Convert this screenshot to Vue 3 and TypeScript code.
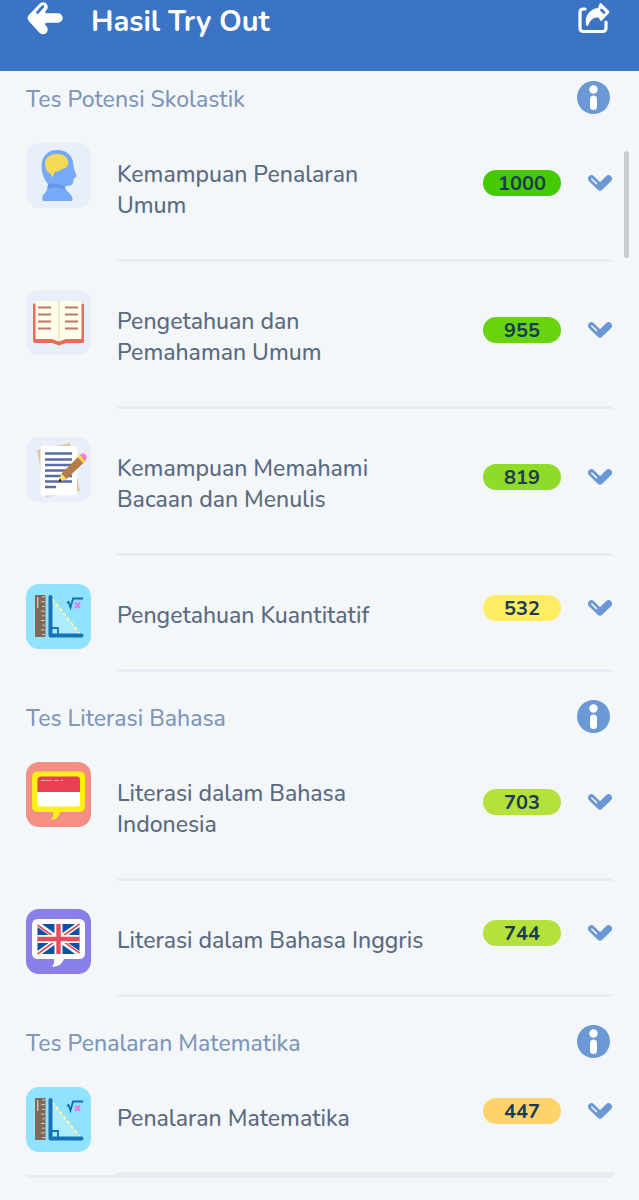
<script setup lang="ts">
type IconKind = 'head' | 'book' | 'paper' | 'math' | 'indonesia' | 'english'

interface Subtest {
  name: string
  score: number
  color: string
  icon: IconKind
}

interface Group {
  title: string
  items: Subtest[]
}

const groups: Group[] = [
  {
    title: 'Tes Potensi Skolastik',
    items: [
      { name: 'Kemampuan Penalaran Umum', score: 1000, color: '#45c900', icon: 'head' },
      { name: 'Pengetahuan dan Pemahaman Umum', score: 955, color: '#67d40f', icon: 'book' },
      { name: 'Kemampuan Memahami Bacaan dan Menulis', score: 819, color: '#8fdb27', icon: 'paper' },
      { name: 'Pengetahuan Kuantitatif', score: 532, color: '#ffee63', icon: 'math' },
    ],
  },
  {
    title: 'Tes Literasi Bahasa',
    items: [
      { name: 'Literasi dalam Bahasa Indonesia', score: 703, color: '#b5e13c', icon: 'indonesia' },
      { name: 'Literasi dalam Bahasa Inggris', score: 744, color: '#b5e13c', icon: 'english' },
    ],
  },
  {
    title: 'Tes Penalaran Matematika',
    items: [{ name: 'Penalaran Matematika', score: 447, color: '#ffd36b', icon: 'math' }],
  },
]

const rulerTicks = [0, 1, 2, 3, 4, 5, 6, 7, 8]
</script>

<template>
  <div class="page">
    <header class="bar">
      <button type="button" class="plain" aria-label="Kembali">
        <svg width="36" height="40" viewBox="0 0 36 40">
          <path d="M16 6 L5.500 17 L16 28.500 M7 17 H31" fill="none" stroke="#fff" stroke-width="9.500" stroke-linecap="round" stroke-linejoin="round" />
          <path d="M5 17 L17 7 L19 13 V21 L17 27 Z" fill="#fff" />
          <path d="M16 5.500 L10.500 11.500" stroke="#3b73c5" stroke-width="2.600" stroke-linecap="round" />
        </svg>
      </button>
      <h1>Hasil Try Out</h1>
      <button type="button" class="plain" aria-label="Bagikan">
        <svg width="32" height="38" viewBox="0 0 32 38">
          <path d="M7 7 H5.500 Q2 7 2 10.500 V26 Q2 29.500 5.500 29.500 H24.500 Q28 29.500 28 26 V20" fill="none" stroke="#fff" stroke-width="3.200" stroke-linecap="round" />
          <path d="M8 23 C6.500 13 12 7 20 6 L21.500 2 Q22 .5 23.500 1.500 L31 9 Q31.800 10 31 11 L24 18.500 Q22.500 19.500 22 18 L20.500 15.500 C15 15.500 12 18 10.500 23 Q9 25 8 23 Z" fill="#fff" />
          <path d="M23.500 8 L26 10.500" stroke="#3b73c5" stroke-width="2.600" stroke-linecap="round" />
        </svg>
      </button>
    </header>

    <main class="content">
      <section v-for="group in groups" :key="group.title" class="group">
        <div class="group-head">
          <h2>{{ group.title }}</h2>
          <button type="button" class="plain" :aria-label="'Info ' + group.title">
            <svg width="33" height="33" viewBox="0 0 33 33">
              <circle cx="16.500" cy="16.500" r="16.500" fill="#6b98d6" />
              <circle cx="16.500" cy="8.500" r="4.200" fill="#fff" />
              <rect x="13" y="14.500" width="7" height="14.500" rx="3.500" fill="#fff" />
            </svg>
          </button>
        </div>

        <ul class="rows">
          <li v-for="item in group.items" :key="item.name" class="row">
            <svg class="tile" :class="item.icon" viewBox="0 0 65 65" aria-hidden="true">
              <g v-if="item.icon === 'head'">
                <path d="M22 41 C18 36 15.500 30 15.500 23 C15.500 13 22 7 31 7 C41 7 47 13 47.500 22 C47.500 26 50 30 50.500 33 Q50.500 35 48 35 L47 40 Q46 43.500 39.500 43 V46 L45 52 Q47.500 56 46 58 H17 Q15.500 56 17 52 Q22 48 22 41 Z" fill="#76a9f8" />
                <path d="M22 41 Q30 39 39 44 V47 Q30 42 21.500 46 Z" fill="#6796e8" />
                <path d="M19.500 24 C17 16 24 10.500 31 11 C38 10.500 44 16 42 22 Q41 25.500 36 26 Q33 29 29 29 L26.500 34 Q25 34 25 31 Q20 29 19.500 24 Z" fill="#f4d957" />
              </g>
              <g v-else-if="item.icon === 'book'">
                <path d="M7 14.500 Q7 13.500 9 13.500 H56 Q58 13.500 58 15 V52 Q58 53 56 53 H40 L33 55.500 L26 53 H9 Q7 53 7 51 Z" fill="#e66e5c" />
                <path d="M9.500 12 Q21 9 33 12 Q44 9 55.500 12 V49 H40 L33 51.500 L26 49 H9.500 Z" fill="#fffeea" />
                <path d="M33 12 V51" stroke="#e9e6cb" stroke-width="1.500" />
                <path d="M12 17.500 H25 M12 24.500 H25 M12 31.500 H25 M12 38.500 H25 M39 17.500 H52 M39 24.500 H52 M39 31.500 H52 M39 38.500 H52" stroke="#bd776d" stroke-width="2.200" />
              </g>
              <g v-else-if="item.icon === 'paper'">
                <path d="M11 13 L44 6 L54 54 L20 60 Z" fill="#e0c6a2" />
                <rect x="14.500" y="9" width="36.500" height="49.500" rx="3" fill="#fff" />
                <path d="M19 16.500 H46 M19 22.500 H46 M19 28 H46 M19 33.500 H46 M19 39 H46 M19 44.500 H46 M19 50 H30" stroke="#596ba7" stroke-width="2.400" />
                <path d="M54 18 L59.500 24 L40.500 42 L32 45.500 L35.500 36.500 Z" fill="#b47b47" />
                <path d="M35.500 36.500 L40.500 42 L32 45.500 Z" fill="#ffe064" />
                <path d="M34 41.500 L36 44 L32 45.500 Z" fill="#222" />
                <path d="M51.500 20 L54 18 L59.500 24 L57 26 Z" fill="#ffdf42" />
                <path d="M54 18 L56 16.500 Q58 15.500 60 18 Q61.500 20.500 60.500 22 L59 24 Z" fill="#f57fd0" />
              </g>
              <g v-else-if="item.icon === 'math'">
                <rect x="9" y="11" width="10.500" height="42" rx="1" fill="#806758" />
                <path d="M11.800 13 V24" stroke="#efe7df" stroke-width="1" />
                <path v-for="n in rulerTicks" :key="n" :d="`M${n % 2 ? 15 : 16} ${13 + n * 4.700} H19`" stroke="#d9c9ba" stroke-width="1" />
                <path d="M25 14 L54 51 H25 Z" fill="#adebff" />
                <path d="M26 15 L54 50" stroke="#fff4a8" stroke-width="2" stroke-dasharray="4 2" />
                <path d="M24.500 13 V51.500 H55.500" fill="none" stroke="#1574b8" stroke-width="4" stroke-linecap="round" stroke-linejoin="round" />
                <path d="M26 44 H32 V51" fill="none" stroke="#1574b8" stroke-width="1.800" />
                <path d="M41 19 L42.500 18 L44.500 23.500 L47 14.500 H57" fill="none" stroke="#0f6fb3" stroke-width="1.800" />
                <path d="M49 18.500 L54 24 M54 18.500 L49 24" stroke="#e17ee5" stroke-width="2.200" />
              </g>
              <g v-else-if="item.icon === 'indonesia'">
                <path d="M12 9.500 H53 Q59 9.500 59 15 V44 Q59 50 53 50 H34 Q33 57 25 58 Q28 54 27.500 50 H12 Q6 50 6 44 V15 Q6 9.500 12 9.500 Z" fill="#ffef18" />
                <path d="M11.500 30 V18 Q11.500 14.500 15 14.500 H51 Q54 14.500 54 18 V30 Z" fill="#e83f52" />
                <path d="M11.500 30 H54 V41 Q54 44.500 51 44.500 H15 Q11.500 44.500 11.500 41 Z" fill="#fff" />
                <path d="M15 18.500 H26 M28 18.500 H33 M35 18.500 H37" stroke="#f4a1ad" stroke-width="1" />
              </g>
              <g v-else>
                <path d="M12 10 H53 Q59 10 59 16 V44 Q59 50 53 50 H38 Q36 57 26 58 Q29 54 28 50 H12 Q6 50 6 44 V16 Q6 10 12 10 Z" fill="#fff" />
                <rect x="11.500" y="15" width="42" height="30" fill="#0952a6" />
                <path d="M11.500 15 L53.500 45 M53.500 15 L11.500 45" stroke="#fff" stroke-width="5" />
                <path d="M11.500 16 L28 28 M53.500 15 L37 27 M53.500 44 L37 32 M11.500 45 L28 33" stroke="#e94b5b" stroke-width="1.600" />
                <path d="M32.500 15 V45 M11.500 30 H53.500" stroke="#fff" stroke-width="8" />
                <path d="M32.500 15 V45 M11.500 30 H53.500" stroke="#e94b5b" stroke-width="4.400" />
              </g>
            </svg>
            <div class="body">
              <span class="name">{{ item.name }}</span>
              <div class="result">
                <span class="score" :style="{ backgroundColor: item.color }">{{ item.score }}</span>
                <button type="button" class="plain" :aria-label="'Detail ' + item.name">
                  <svg width="24" height="16" viewBox="0 0 24 16">
                    <path d="M3.500 3.800 L12 12 L20.500 3.800" fill="none" stroke="#6b97d5" stroke-width="7" stroke-linecap="round" stroke-linejoin="round" />
                    <path d="M3.800 4 L8.500 8.600" stroke="#f3f7fa" stroke-width="1.500" stroke-linecap="round" />
                  </svg>
                </button>
              </div>
            </div>
          </li>
        </ul>
      </section>
    </main>
    <div class="scroll-thumb"></div>
  </div>
</template>

<style>
body {
  margin: 0;
  background: #f3f7fa;
}
</style>

<style scoped>
.page {
  position: relative;
  min-height: 100vh;
  box-sizing: border-box;
  background: #f3f7fa;
  font-family: Nunito, Lato, 'Open Sans', sans-serif;
}
.bar {
  display: flex;
  align-items: center;
  padding: 1px 29px 30px 27px;
  background: #3b73c5;
}
h1 {
  flex: 1;
  margin: 0 0 0 28px;
  padding-top: 2px;
  color: #fff;
  font-size: 29px;
  line-height: 38px;
  font-weight: 700;
}
.plain {
  display: block;
  margin: 0;
  padding: 0;
  border: 0;
  background: none;
  cursor: pointer;
}
.plain svg {
  display: block;
}
.content {
  margin: 0 26px;
  border-bottom: 3px solid #e8edf5;
}
.group {
  padding-top: 28px;
}
.group:first-child {
  padding-top: 10px;
}
.group-head {
  display: flex;
  align-items: center;
  justify-content: space-between;
  margin: 0 3px 29px 0;
}
h2 {
  margin: 0;
  padding-top: 4px;
  color: #7f96b8;
  font-size: 23px;
  line-height: 29px;
  font-weight: 500;
}
.rows {
  display: flex;
  flex-direction: column;
  gap: 28px;
  margin: 0;
  padding: 0;
  list-style: none;
}
.row {
  display: flex;
  align-items: flex-start;
  gap: 26px;
}
.tile {
  flex: none;
  width: 65px;
  height: 65px;
  border-radius: 13px;
  background: #e8eff9;
}
.tile.math {
  background: #91e2ff;
}
.tile.indonesia {
  background: #f48f84;
}
.tile.english {
  background: #8880e8;
}
.body {
  display: flex;
  flex: 1;
  align-items: center;
  padding: 16px 0 38px;
  border-bottom: 3px solid #e8edf5;
}
.name {
  flex: 1;
  padding-right: 56px;
  color: #5b6a80;
  font-size: 23px;
  line-height: 31px;
  font-weight: 500;
}
.result {
  display: flex;
  align-items: center;
  gap: 27px;
  margin: -10px 1px 5px 0;
}
.score {
  width: 78px;
  padding-top: 2px;
  border-radius: 13px;
  color: #1c3b52;
  font-size: 20px;
  line-height: 24px;
  font-weight: 700;
  text-align: center;
}
.scroll-thumb {
  position: absolute;
  top: 151px;
  right: 10px;
  width: 5px;
  height: 107px;
  border-radius: 3px;
  background: #c9cbce;
}
</style>
